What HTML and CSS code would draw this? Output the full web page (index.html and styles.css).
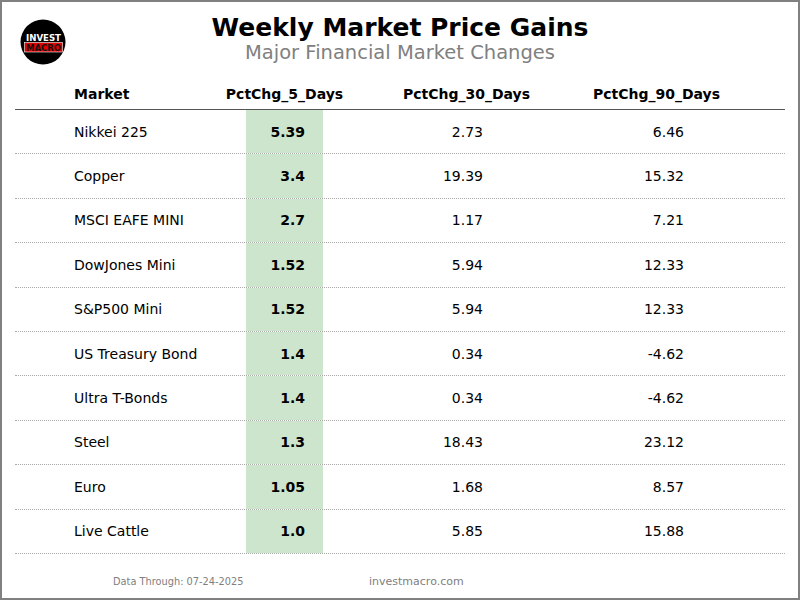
FILE: index.html
```html
<!DOCTYPE html>
<html>
<head>
<meta charset="utf-8">
<link rel="stylesheet" href="styles.css">
</head>
<body>
<div class="page">
  <header class="head">
    <div class="logo-cell">
      <svg class="logo" width="46" height="46" viewBox="0 0 46 46">
        <circle cx="23" cy="23" r="22.5" fill="#000"/>
        <text x="6" y="22" textLength="35" lengthAdjust="spacingAndGlyphs" class="logo-t1">INVEST</text>
        <rect x="4.5" y="23.5" width="38" height="9.5" fill="#e00000" stroke="#fff" stroke-width="0.6"/>
        <text x="6" y="31.8" textLength="35" lengthAdjust="spacingAndGlyphs" class="logo-t2">MACRO</text>
      </svg>
    </div>
    <div class="titles">
      <h1 class="title">Weekly Market Price Gains</h1>
      <div class="subtitle">Major Financial Market Changes</div>
    </div>
    <div></div>
  </header>

  <div class="table">
    <div class="row hdr">
      <div class="c1">Market</div>
      <div class="c2">PctChg_5_Days</div>
      <div class="c3">PctChg_30_Days</div>
      <div class="c4">PctChg_90_Days</div>
      <div></div>
    </div>
    <div class="row"><div class="c1">Nikkei 225</div><div class="c2">5.39</div><div class="c3">2.73</div><div class="c4">6.46</div><div></div></div>
    <div class="row"><div class="c1">Copper</div><div class="c2">3.4</div><div class="c3">19.39</div><div class="c4">15.32</div><div></div></div>
    <div class="row"><div class="c1">MSCI EAFE MINI</div><div class="c2">2.7</div><div class="c3">1.17</div><div class="c4">7.21</div><div></div></div>
    <div class="row"><div class="c1">DowJones Mini</div><div class="c2">1.52</div><div class="c3">5.94</div><div class="c4">12.33</div><div></div></div>
    <div class="row"><div class="c1">S&amp;P500 Mini</div><div class="c2">1.52</div><div class="c3">5.94</div><div class="c4">12.33</div><div></div></div>
    <div class="row"><div class="c1">US Treasury Bond</div><div class="c2">1.4</div><div class="c3">0.34</div><div class="c4">-4.62</div><div></div></div>
    <div class="row"><div class="c1">Ultra T-Bonds</div><div class="c2">1.4</div><div class="c3">0.34</div><div class="c4">-4.62</div><div></div></div>
    <div class="row"><div class="c1">Steel</div><div class="c2">1.3</div><div class="c3">18.43</div><div class="c4">23.12</div><div></div></div>
    <div class="row"><div class="c1">Euro</div><div class="c2">1.05</div><div class="c3">1.68</div><div class="c4">8.57</div><div></div></div>
    <div class="row"><div class="c1">Live Cattle</div><div class="c2">1.0</div><div class="c3">5.85</div><div class="c4">15.88</div><div></div></div>
  </div>

  <footer class="foot">
    <span class="date">Data Through: 07-24-2025</span>
    <span class="site">investmacro.com</span>
  </footer>
</div>
</body>
</html>
```

FILE: styles.css
```css
* { box-sizing: border-box; }
html, body { margin: 0; padding: 0; }
body { font-family: "DejaVu Sans", sans-serif; color: #000; background: #fff; }

.page {
  width: 800px;
  height: 600px;
  border: 2px solid #808080;
  overflow: hidden;
}

.head {
  display: grid;
  grid-template-columns: 1fr auto 1fr;
  height: 76px;
}
.logo-cell { padding: 17px 0 0 18px; }
.logo { display: block; }
.logo-t1 { font-family: "DejaVu Sans", sans-serif; font-weight: bold; font-size: 9px; fill: #fff; }
.logo-t2 { font-family: "DejaVu Sans", sans-serif; font-weight: bold; font-size: 9px; fill: #111; }

.titles { text-align: center; padding-top: 11px; }
.title {
  margin: 0;
  font-size: 25px;
  font-weight: bold;
  line-height: 30px;
}
.subtitle {
  font-size: 19.5px;
  color: #808080;
  line-height: 24px;
  margin-top: -2px;
}

.table {
  margin-left: 13px;
  width: 770px;
}
.row {
  display: grid;
  grid-template-columns: 231px 77px 287px 93px 1fr;
  height: 44.4px;
  font-size: 14px;
  border-bottom: 1px dotted #aaa;
}
.row > div { display: flex; align-items: center; white-space: nowrap; }
.row .c1 { padding-left: 59px; }
.row .c2 { background: #cde5cd; justify-content: flex-end; padding-right: 18px; font-weight: bold; }
.row .c3 { justify-content: flex-end; padding-right: 127px; }
.row .c4 { justify-content: flex-end; padding-right: 19px; }

.row.hdr {
  height: 32px;
  font-weight: bold;
  border-bottom: 1px solid #555;
}
.row.hdr > div { justify-content: center; padding: 0; background: none; }
.row.hdr .c1 { justify-content: flex-start; padding-left: 59px; }

.foot {
  display: flex;
  color: #808080;
  height: 56px;
  align-items: center;
}
.date { font-size: 9.8px; margin-left: 111px; width: 256px; }
.site { font-size: 11px; }
```
